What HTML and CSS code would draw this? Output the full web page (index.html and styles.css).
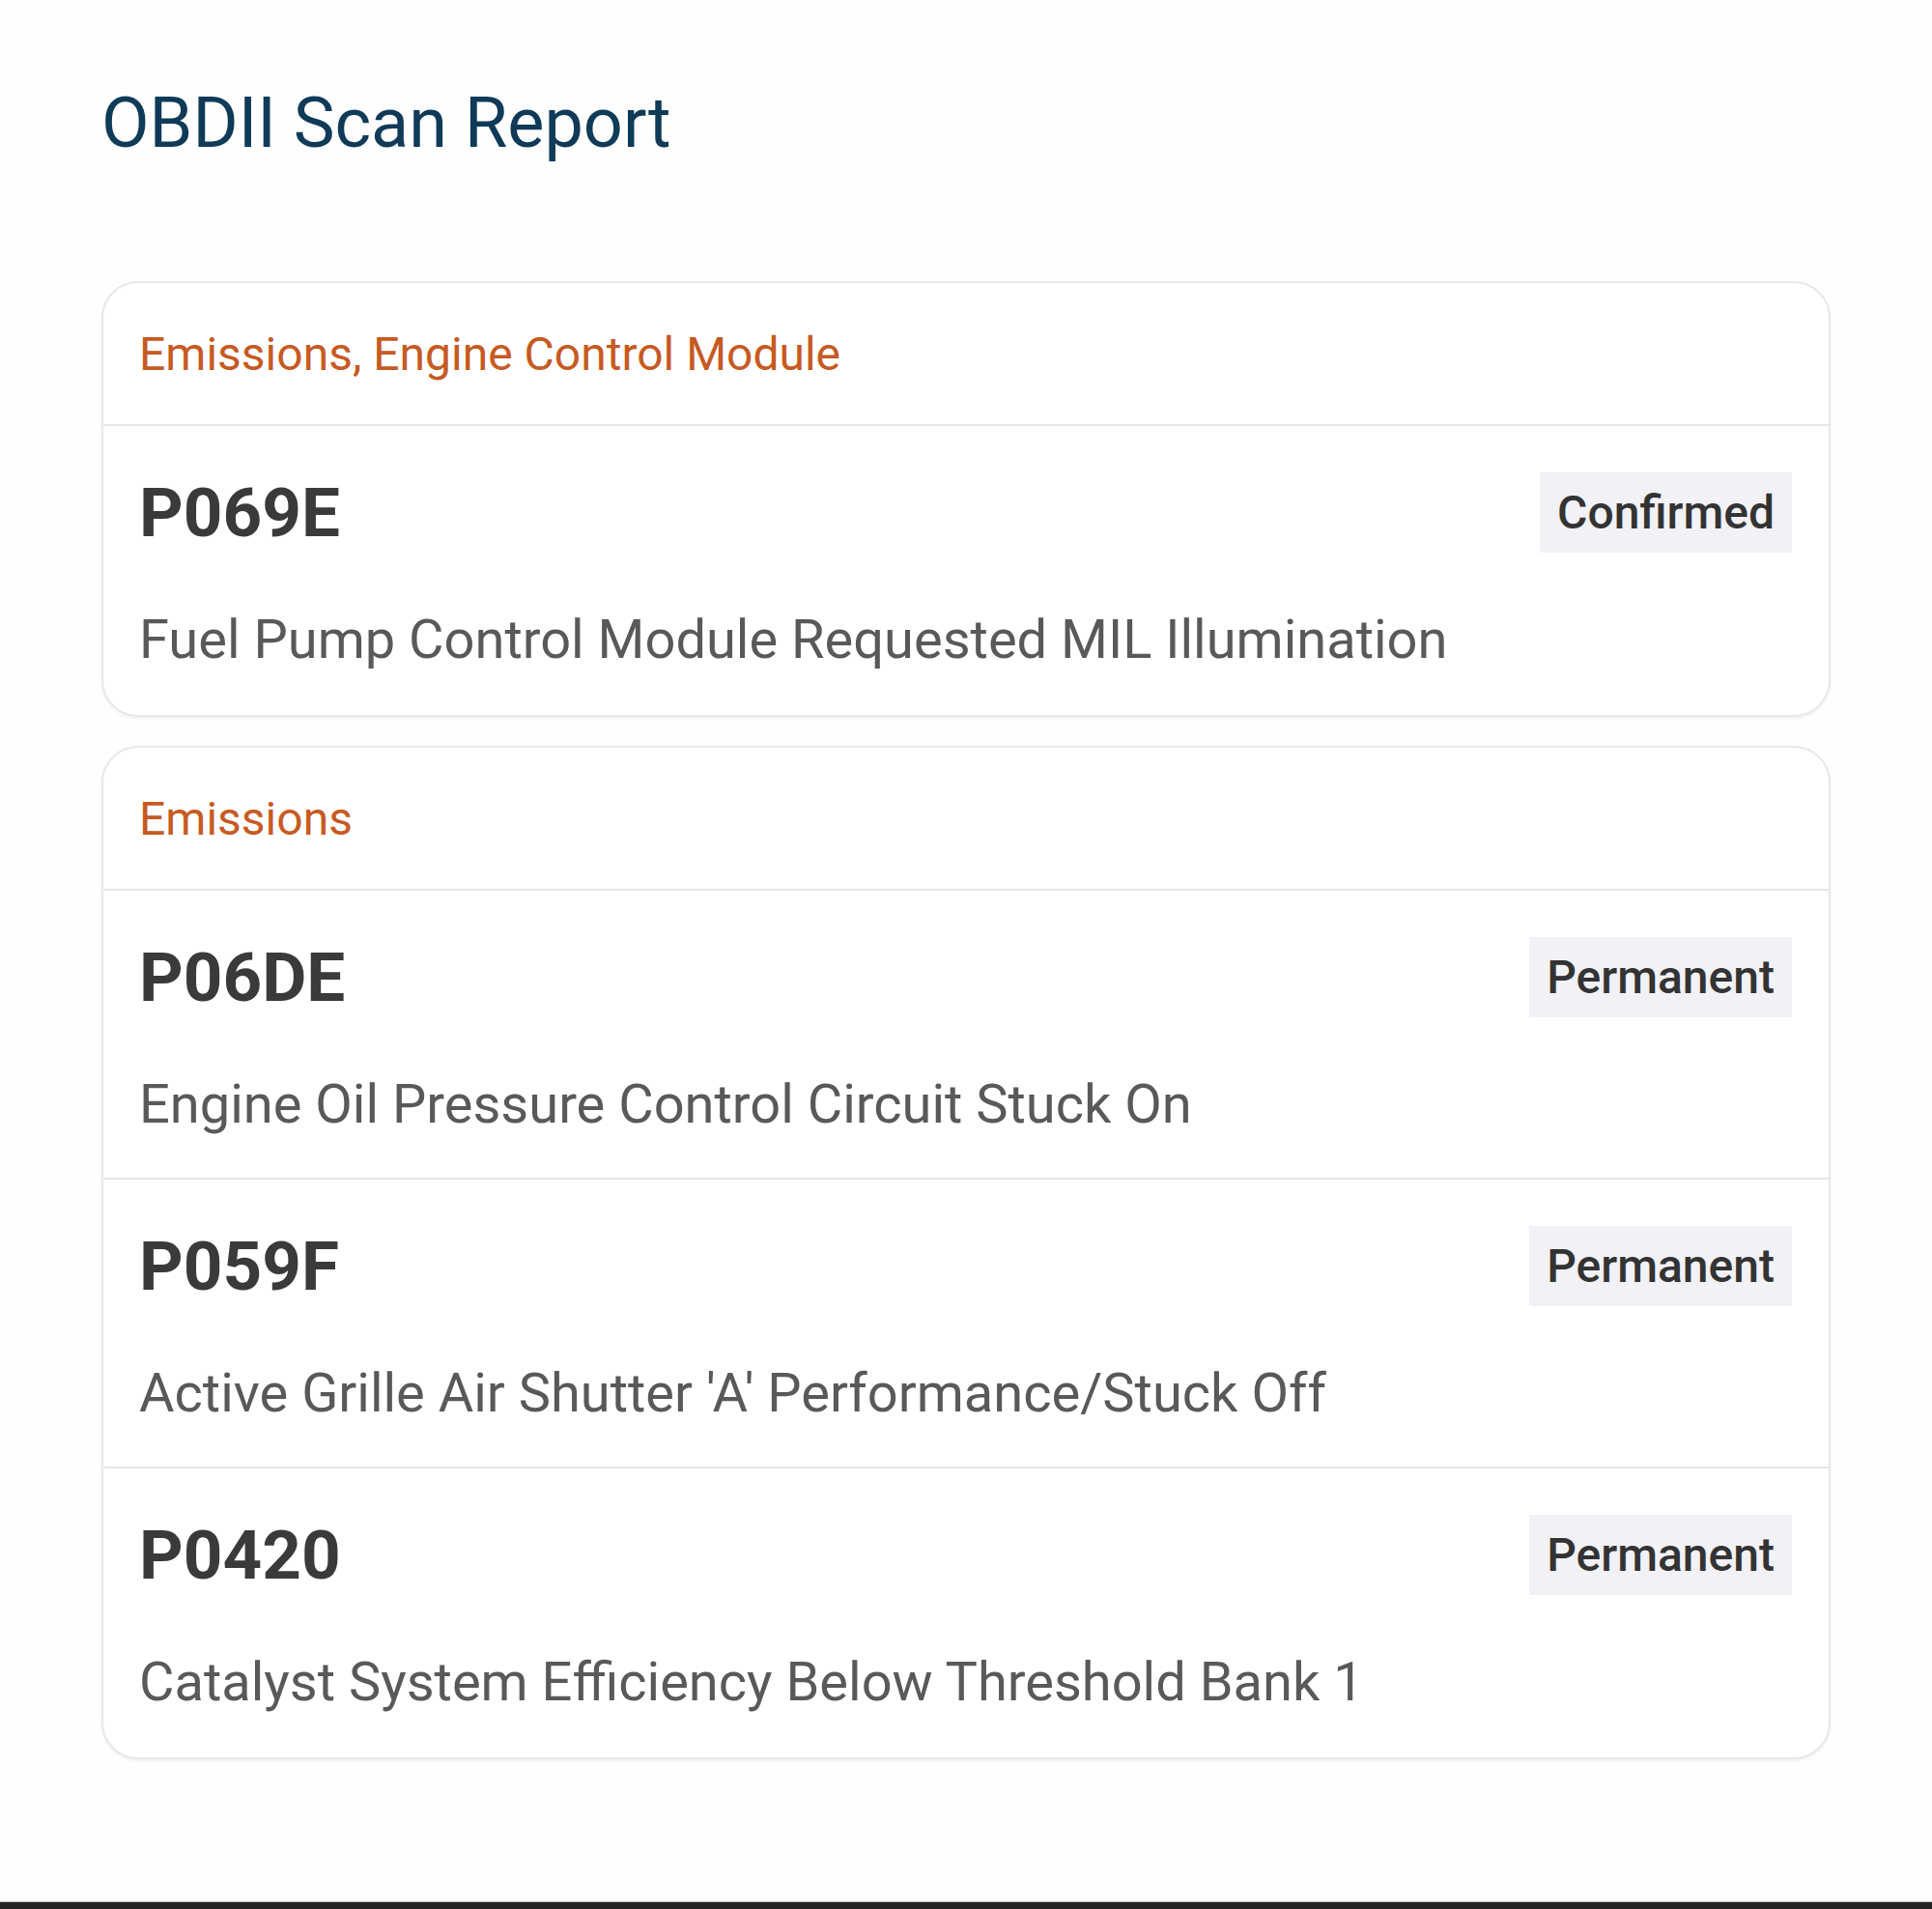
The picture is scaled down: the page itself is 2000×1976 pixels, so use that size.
FILE: index.html
```html
<!DOCTYPE html>
<html lang="en">
<head>
    <meta charset="UTF-8">
    <meta name="viewport" content="width=device-width, initial-scale=1.0">
    <title>OBDII Scan Report</title>
    <link rel="stylesheet" href="styles.css">
</head>
<body>
    <div class="page">
        <h1 class="title">OBDII Scan Report</h1>

        <div class="card">
            <div class="card-header">Emissions, Engine Control Module</div>
            <div class="row">
                <div class="row-top">
                    <span class="code">P069E</span>
                    <span class="badge">Confirmed</span>
                </div>
                <div class="desc">Fuel Pump Control Module Requested MIL Illumination</div>
            </div>
        </div>

        <div class="card">
            <div class="card-header">Emissions</div>
            <div class="row">
                <div class="row-top">
                    <span class="code">P06DE</span>
                    <span class="badge">Permanent</span>
                </div>
                <div class="desc">Engine Oil Pressure Control Circuit Stuck On</div>
            </div>
            <div class="row">
                <div class="row-top">
                    <span class="code">P059F</span>
                    <span class="badge">Permanent</span>
                </div>
                <div class="desc">Active Grille Air Shutter 'A' Performance/Stuck Off</div>
            </div>
            <div class="row">
                <div class="row-top">
                    <span class="code">P0420</span>
                    <span class="badge">Permanent</span>
                </div>
                <div class="desc">Catalyst System Efficiency Below Threshold Bank 1</div>
            </div>
        </div>
    </div>
    <div class="navbar"></div>
</body>
</html>
```

FILE: styles.css
```css
html, body {
    margin: 0;
    padding: 0;
}
body {
    font-family: Roboto, "Noto Sans", Arial, sans-serif;
    background: #fefefe;
    height: 1976px;
    display: flex;
    flex-direction: column;
}
.page {
    flex: 1;
    padding: 0 105px;
}
.title {
    margin: 0;
    padding: 78px 0 0 0;
    height: 291px;
    box-sizing: border-box;
    font-size: 72px;
    line-height: 100px;
    font-weight: 400;
    color: #0f3a58;
}
.card {
    border: 2px solid #e8e8e8;
    border-radius: 38px;
    box-shadow: 0 2px 3px rgba(0, 0, 0, 0.06);
    margin-bottom: 30px;
    background: #fff;
    overflow: hidden;
}
.card-header {
    height: 146px;
    display: flex;
    align-items: center;
    padding: 0 37px;
    border-bottom: 2px solid #e6e6e6;
    font-size: 48px;
    color: #c65a22;
}
.row {
    height: 299px;
    box-sizing: border-box;
    padding: 48px 38px 0 37px;
    border-bottom: 2px solid #e6e6e6;
}
.row:last-child {
    border-bottom: none;
}
.row-top {
    display: flex;
    justify-content: space-between;
    align-items: center;
    height: 83px;
}
.code {
    font-size: 71px;
    font-weight: 700;
    color: #3a3a3a;
}
.badge {
    background: #f1f1f6;
    height: 83px;
    display: flex;
    align-items: center;
    padding: 0 18px;
    font-size: 48px;
    font-weight: 500;
    color: #333;
}
.desc {
    margin-top: 50px;
    font-size: 56px;
    line-height: 80px;
    color: #595959;
}
.navbar {
    height: 7px;
    background: #222;
    border-top: 1px solid #bbb;
}
```
